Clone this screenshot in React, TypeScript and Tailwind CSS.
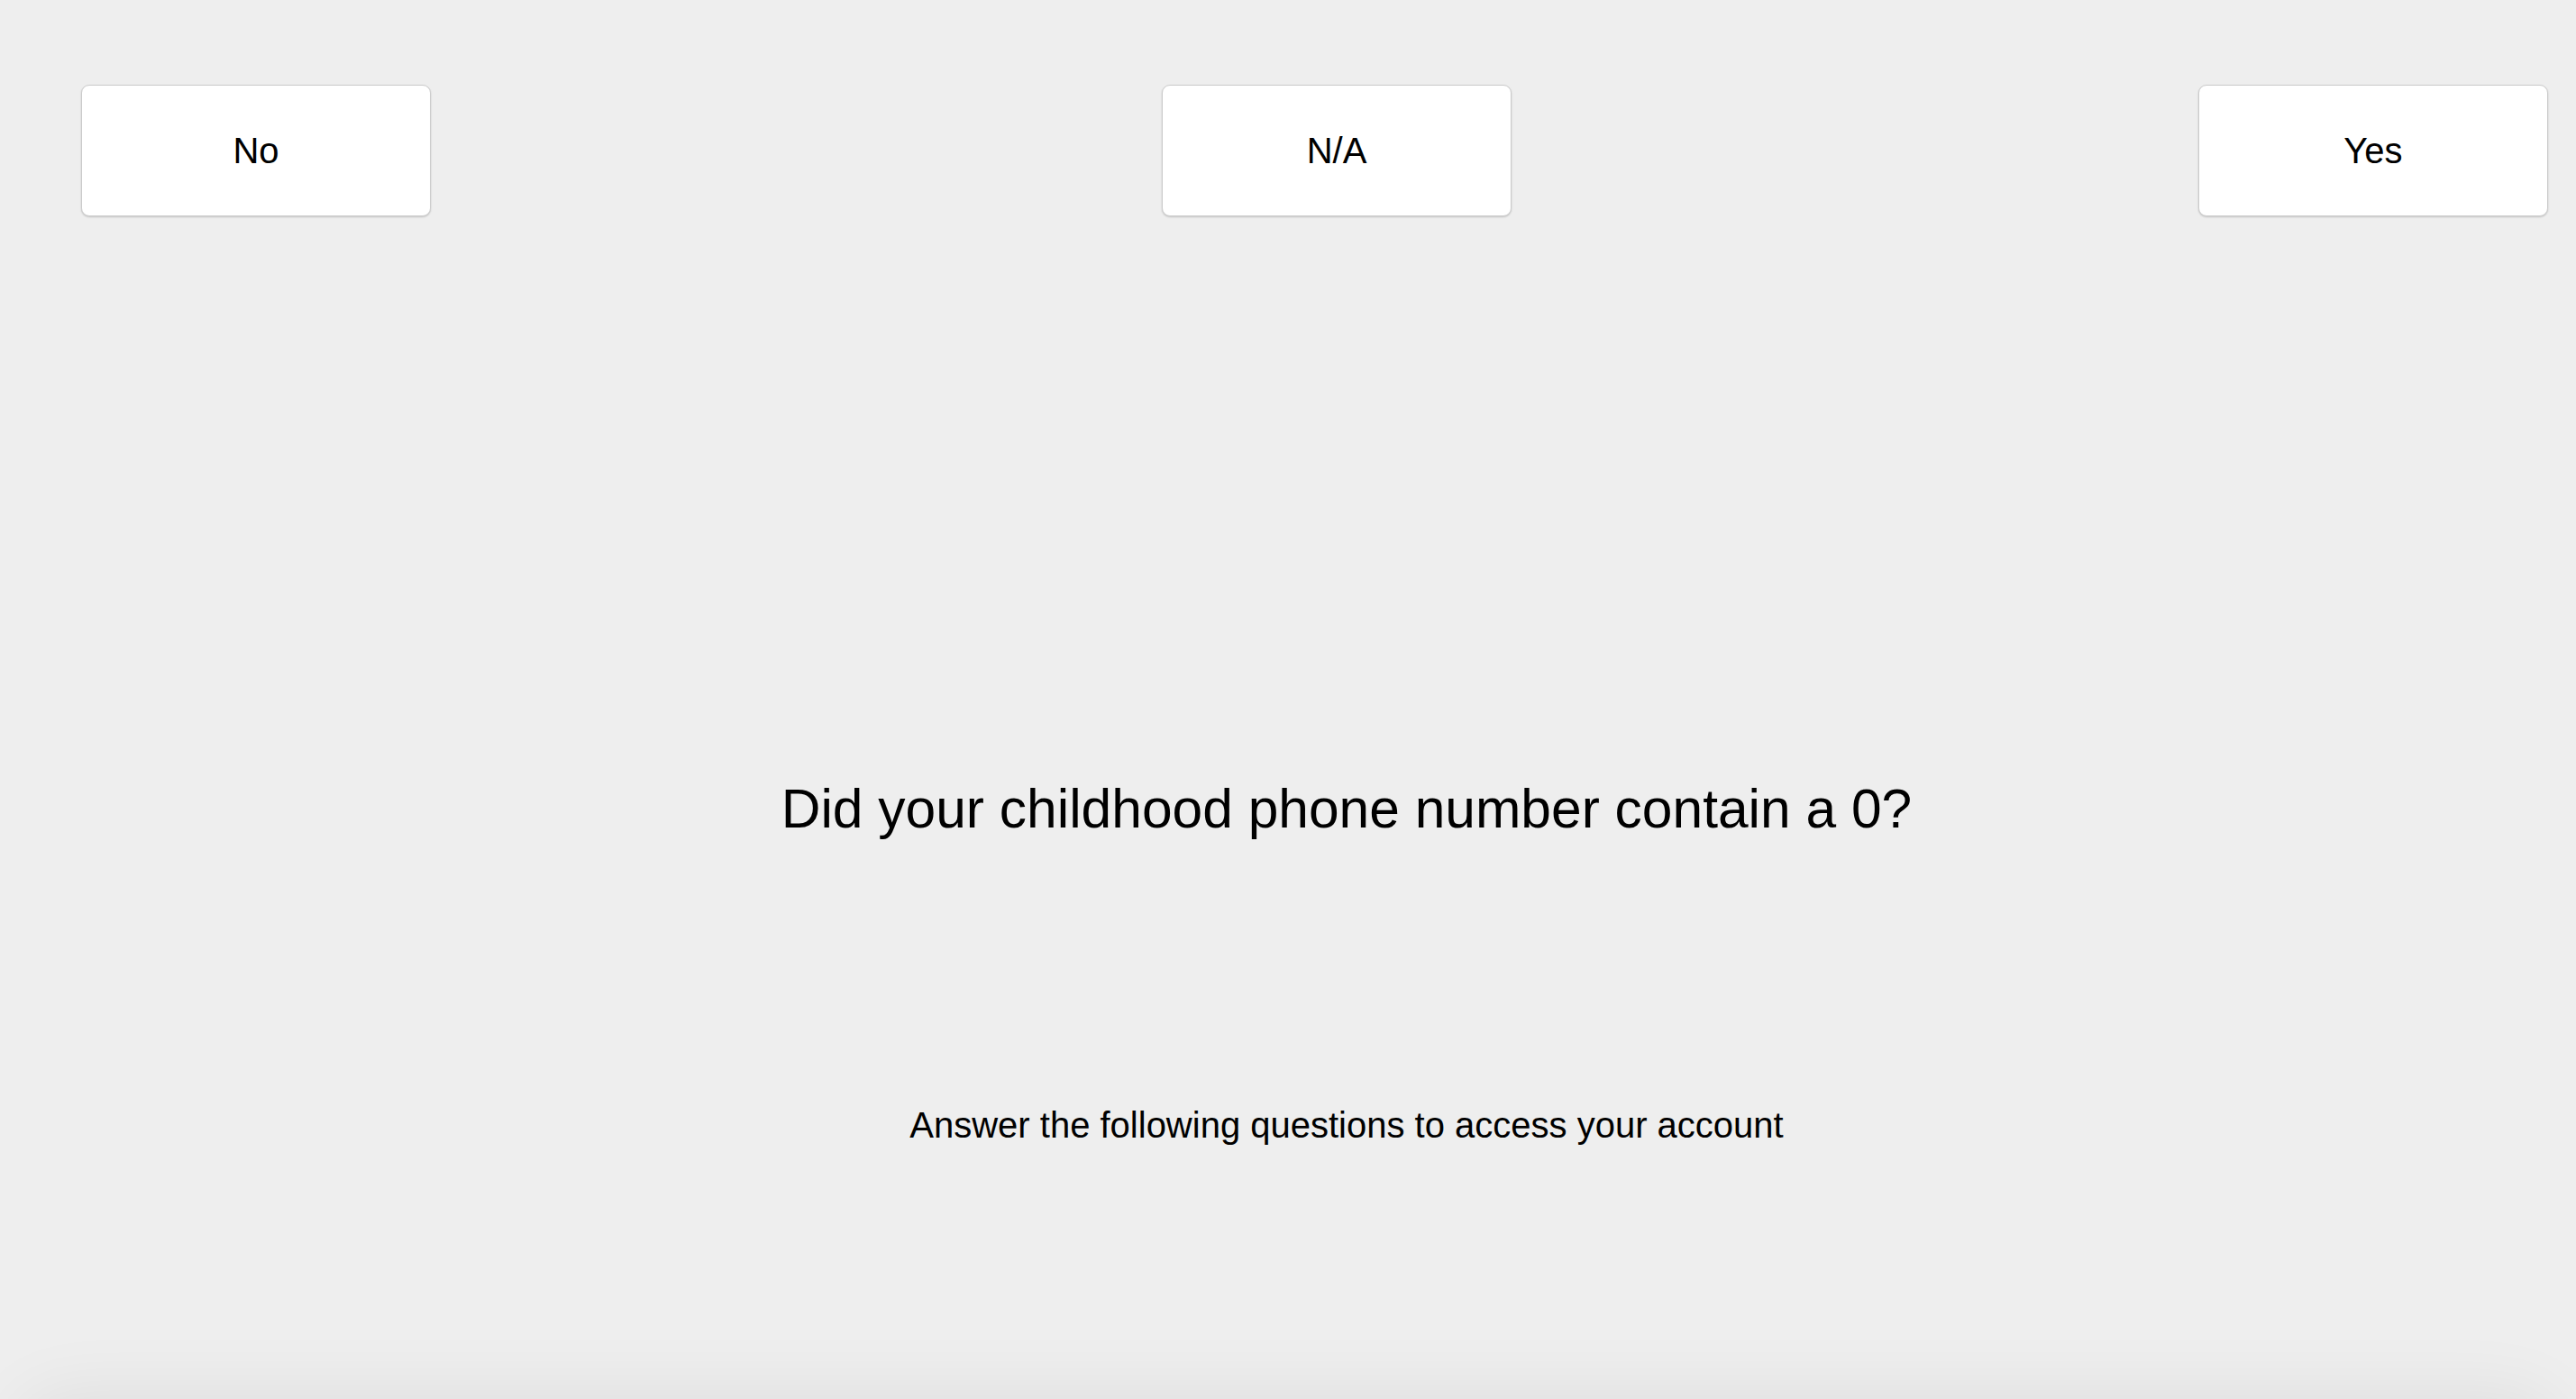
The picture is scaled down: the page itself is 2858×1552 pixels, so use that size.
import React from "react";

const btnCls =
  "flex h-[146px] w-[388px] items-center justify-center rounded-[9px] border border-[#cbcbcb] bg-white text-[40px] leading-none text-black shadow-[0_1px_2px_rgba(0,0,0,0.18)]";

export default function App() {
  return (
    <div
      className="relative h-[1552px] w-full overflow-hidden bg-[#eeeeee]"
      style={{ fontFamily: '"Liberation Sans", Arial, sans-serif' }}
    >
      {/* Answer buttons */}
      <div className="flex pt-[94px]">
        <button type="button" className={`ml-[90px] ${btnCls}`}>
          No
        </button>
        <button type="button" className={`ml-[811px] ${btnCls}`}>
          N/A
        </button>
        <button type="button" className={`ml-[762px] ${btnCls}`}>
          Yes
        </button>
      </div>

      {/* Question */}
      <div className="pl-[130px] text-center text-black">
        <h1 className="mt-[627px] text-[60.5px] font-normal leading-[60px]">
          Did your childhood phone number contain a 0?
        </h1>
        <p className="mt-[301px] text-[40px] leading-none">
          Answer the following questions to access your account
        </p>
      </div>

      {/* Sheet peeking from below */}
      <div className="mx-[40px] mt-[300px] h-[200px] rounded-[30px] bg-[#e2e2e2] shadow-[0_0_80px_20px_rgba(0,0,0,0.07)]" />
    </div>
  );
}
